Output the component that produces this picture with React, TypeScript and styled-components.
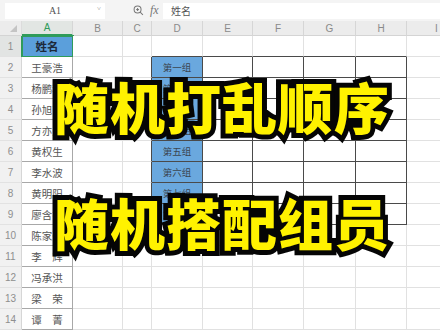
import {FC} from "react";
import styled, {createGlobalStyle} from "styled-components";

const GlobalStyle = createGlobalStyle`
    html, body {
        margin: 0;
        padding: 0;
        background: #ffffff;
    }
    body {
        font-family: "Noto Sans CJK SC", "Liberation Sans", sans-serif;
    }
`;

const COLS = [
    {label: "A", w: 51},
    {label: "B", w: 50},
    {label: "C", w: 29},
    {label: "D", w: 51},
    {label: "E", w: 50},
    {label: "F", w: 51},
    {label: "G", w: 52},
    {label: "H", w: 51},
    {label: "I", w: 60},
];

const NAMES = [
    "姓名", "王豪浩", "杨鹏程", "孙旭东", "方亦凡", "黄权生", "李水波",
    "黄明阳", "廖含香", "陈家豪", "李　辉", "冯承洪", "梁　荣", "谭　菁",
];

const GROUPS = ["第一组", "第二组", "第三组", "第四组", "第五组", "第六组", "第七组", "第八组"];

const Screen = styled.div`
    position: relative;
    width: 440px;
    height: 330px;
    overflow: hidden;
    background: #ffffff;
`;

const FormulaBar = styled.div`
    display: flex;
    align-items: center;
    height: 21px;
    background: #f4f4f4;
    padding: 0 0 0 5px;
    box-sizing: border-box;
`;

const NameBox = styled.div`
    position: relative;
    display: flex;
    align-items: center;
    justify-content: center;
    width: 100px;
    height: 16px;
    background: #ffffff;
    font-family: "Liberation Serif", serif;
    font-size: 10px;
    color: #555;
`;

const Caret = styled.span`
    position: absolute;
    right: 4px;
    top: 2px;
    font-size: 7px;
    color: #888;
`;

const BarIcons = styled.div`
    display: flex;
    align-items: center;
    gap: 6px;
    width: 58px;
    padding-left: 28px;
    box-sizing: border-box;
    color: #777;
`;

const Fx = styled.span`
    font-family: "Liberation Serif", serif;
    font-style: italic;
    font-size: 12px;
    color: #777;
`;

const FormulaInput = styled.div`
    flex: 1;
    height: 16px;
    background: #ffffff;
    display: flex;
    align-items: center;
    padding-left: 8px;
    font-size: 10px;
    color: #555;
`;

const Sheet = styled.div`
    display: grid;
    grid-template-columns: 22px ${COLS.map(c => `${c.w}px`).join(" ")};
    grid-template-rows: 15px repeat(14, 21px);
`;

const Corner = styled.div`
    background: #ececec;
    border-right: 1px solid #dcdcdc;
    border-bottom: 1px solid #d4d4d4;
    box-sizing: border-box;
    position: relative;
    &::after {
        content: "";
        position: absolute;
        right: 4px;
        bottom: 3px;
        border-left: 7px solid transparent;
        border-bottom: 7px solid #c4c4c4;
    }
`;

const ColHead = styled.div<{$active?: boolean}>`
    display: flex;
    align-items: center;
    justify-content: center;
    background: ${p => (p.$active ? "#e2e6e3" : "#ececec")};
    color: ${p => (p.$active ? "#2f9b5a" : "#8a8a8a")};
    border-right: 1px solid #d6d6d6;
    border-bottom: ${p => (p.$active ? "2px solid #2f9b5a" : "1px solid #d4d4d4")};
    box-sizing: border-box;
    font-family: "Liberation Sans", sans-serif;
    font-size: 10px;
`;

const RowHead = styled.div<{$active?: boolean}>`
    display: flex;
    align-items: center;
    justify-content: center;
    background: ${p => (p.$active ? "#e2e4e3" : "#f1f1f1")};
    color: #8e8e8e;
    border-right: 1px solid #d6d6d6;
    border-bottom: 1px solid #e2e2e2;
    box-sizing: border-box;
    font-family: "Liberation Sans", sans-serif;
    font-size: 10px;
`;

const Cell = styled.div<{$bg: string; $right: string; $bottom: string; $small?: boolean; $selected?: boolean}>`
    display: flex;
    align-items: center;
    justify-content: center;
    background: ${p => p.$bg};
    border-right: 1px solid ${p => p.$right};
    border-bottom: 1px solid ${p => p.$bottom};
    box-sizing: border-box;
    font-family: "Noto Sans CJK SC", serif;
    font-size: ${p => (p.$small ? "9.5px" : "10.5px")};
    color: ${p => (p.$small ? "#3c4650" : "#555")};
    white-space: pre;
    ${p => p.$selected && `
        outline: 2px solid #2f9b5a;
        outline-offset: -1px;
        font-weight: 700;
        color: #1d2a3a;
        font-size: 11.5px;
    `}
`;

const Banner = styled.div<{$top: number}>`
    position: absolute;
    left: 54px;
    top: ${p => p.$top}px;
    font-family: "Noto Sans CJK SC", sans-serif;
    font-weight: 900;
    font-size: 55px;
    line-height: 1;
    letter-spacing: 1px;
    color: #fff200;
    -webkit-text-stroke: 10px #050505;
    paint-order: stroke fill;
    white-space: nowrap;
`;

const GRID = "#e1e1e1";
const MID = "#a8a8a8";
const DARK = "#4a4a4a";

// bordered regions: column A (all rows) and D2:H9
const inA = (c: number) => c === 0;
const inTable = (r: number, c: number) => r >= 1 && r <= 8 && c >= 3 && c <= 7;

const colorFor = (r: number, c: number) => {
    if (inTable(r, c)) return DARK;
    if (inA(c)) return MID;
    return null;
};

const SearchIcon: FC = () => (
    <svg width="11" height="11" viewBox="0 0 12 12" fill="none" stroke="#777" strokeWidth="1.1">
        <circle cx="5" cy="5" r="3.8" />
        <line x1="3.4" y1="5" x2="6.6" y2="5" />
        <line x1="5" y1="3.4" x2="5" y2="6.6" />
        <line x1="7.8" y1="7.8" x2="10.8" y2="10.8" />
    </svg>
);

const App: FC = () => {
    const rows = Array.from({length: 14}, (_, r) => r);

    return (
        <Screen>
            <GlobalStyle />
            <FormulaBar>
                <NameBox>
                    A1
                    <Caret>˅</Caret>
                </NameBox>
                <BarIcons>
                    <SearchIcon />
                    <Fx>fx</Fx>
                </BarIcons>
                <FormulaInput>姓名</FormulaInput>
            </FormulaBar>

            <Sheet>
                <Corner />
                {COLS.map((c, i) => (
                    <ColHead key={c.label} $active={i === 0}>{c.label}</ColHead>
                ))}
                {rows.map(r => [
                    <RowHead key={`h${r}`} $active={r === 0}>{r + 1}</RowHead>,
                    ...COLS.map((_, c) => {
                        const own = colorFor(r, c);
                        const rightN = colorFor(r, c + 1);
                        const belowN = colorFor(r + 1, c);
                        const right = own === DARK || rightN === DARK ? DARK : own || rightN || GRID;
                        const bottom = own === DARK || belowN === DARK ? DARK : own || belowN || GRID;
                        let text = "";
                        let bg = "#ffffff";
                        const isGroup = c === 3 && r >= 1 && r <= 8;
                        if (c === 0) {
                            text = NAMES[r];
                            if (r === 0) bg = "#5b9fdb";
                        }
                        if (isGroup) {
                            text = GROUPS[r - 1];
                            bg = "#6aa8de";
                        }
                        return (
                            <Cell
                                key={`${r}-${c}`}
                                $bg={bg}
                                $right={right}
                                $bottom={bottom}
                                $small={isGroup}
                                $selected={r === 0 && c === 0}
                            >
                                {text}
                            </Cell>
                        );
                    }),
                ])}
            </Sheet>

            <Banner $top={78}>随机打乱顺序</Banner>
            <Banner $top={194}>随机搭配组员</Banner>
        </Screen>
    );
};

export default App;
